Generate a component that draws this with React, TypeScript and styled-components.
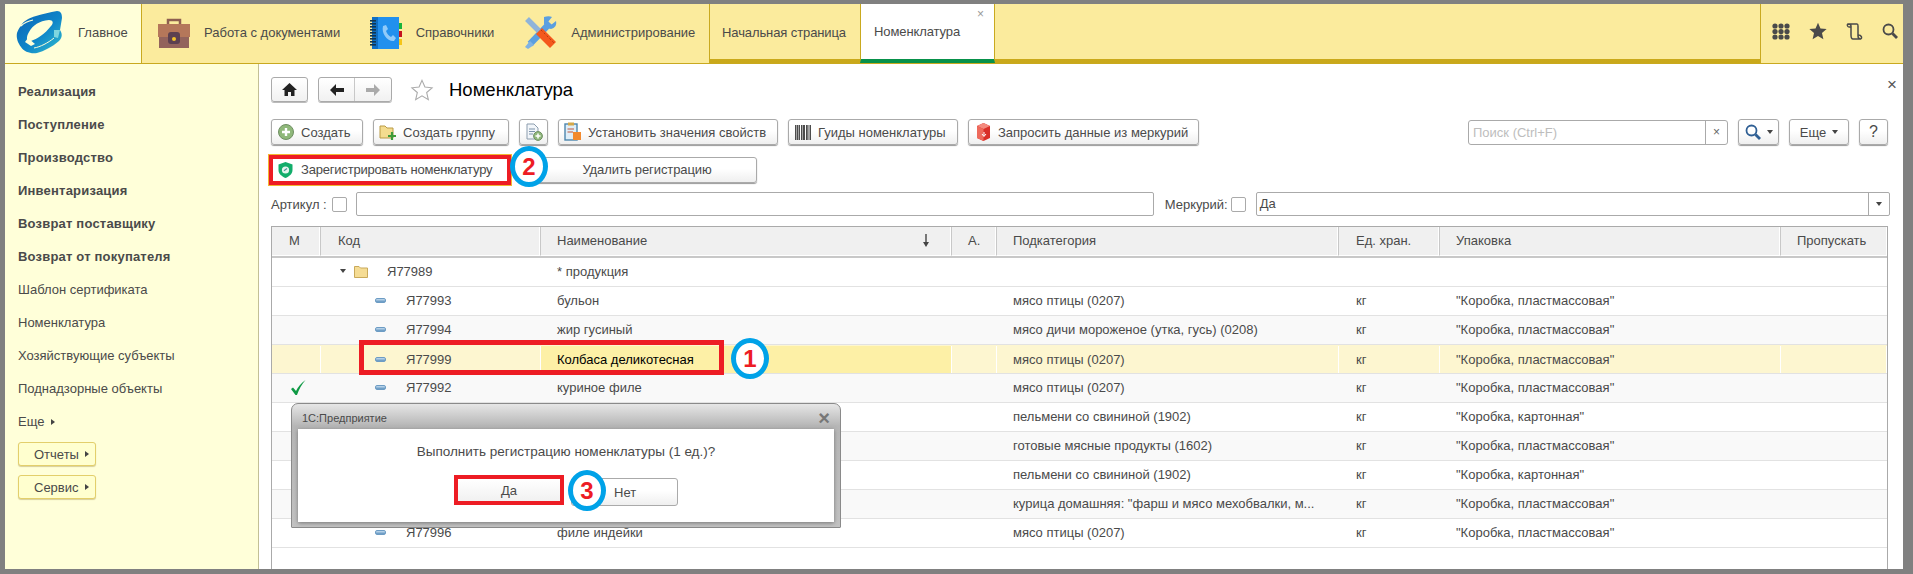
import React from "react";
import styled, { createGlobalStyle } from "styled-components";

const GlobalStyle = createGlobalStyle`
  html, body {
    margin: 0;
    padding: 0;
    background: #808080;
    overflow: hidden;
  }
  * {
    box-sizing: border-box;
  }
`;

const Frame = styled.div`
  position: relative;
  width: 1913px;
  height: 574px;
  padding: 4px 10px 5px 5px;
  background: #808080;
  font-family: "Liberation Sans", Arial, sans-serif;
  font-size: 13px;
  color: #4a4a4a;
`;

const Shell = styled.div`
  display: flex;
  flex-direction: column;
  height: 100%;
  background: #fff;
`;

const TopBar = styled.div`
  display: flex;
  height: 60px;
  flex: none;
  background: #fbeb9d;
  border-bottom: 1px solid #c9a91f;
`;

const HomeItem = styled.div`
  display: flex;
  align-items: center;
  width: 137px;
  padding: 0 0 2px 11px;
  gap: 15px;
  background: #ffffd9;
  border-right: 1px solid #c9a91f;
`;

const MenuBar = styled.div`
  display: flex;
  width: 568px;
  border-right: 1px solid #c9a91f;
`;

const MenuItem = styled.div<{ $w: number }>`
  display: flex;
  align-items: center;
  width: ${(p) => p.$w}px;
  gap: 14px;
  padding-left: 16px;
  padding-bottom: 2px;
  white-space: nowrap;
`;

const TabStrip = styled.div`
  display: flex;
  flex: 1;
  border-bottom: 4px solid #edc91c;
  border-image: linear-gradient(#f3d92e, #c9a81a) 1;
`;

const Tab = styled.div`
  display: flex;
  align-items: center;
  width: 150px;
  padding-left: 12px;
  padding-top: 2px;
  letter-spacing: -0.1px;
`;

const ActiveTab = styled.div`
  position: relative;
  display: flex;
  align-items: center;
  width: 135px;
  margin-bottom: -4px;
  padding-left: 13px;
  letter-spacing: -0.1px;
  background: #fff;
  border-left: 1px solid #c9a91f;
  border-right: 1px solid #c9a91f;
  border-bottom: 4px solid #08914a;
`;

const TabClose = styled.span`
  position: absolute;
  top: 3px;
  right: 10px;
  font-size: 12px;
  color: #999;
`;

const TopTools = styled.div`
  display: flex;
  align-items: center;
  width: 143px;
  gap: 19px;
  padding: 0 0 5px 11px;
  border-left: 1px solid #c9a91f;
`;

const Main = styled.div`
  display: flex;
  flex: 1;
  min-height: 0;
`;

const Sidebar = styled.div`
  display: flex;
  flex-direction: column;
  width: 254px;
  flex: none;
  padding: 11px 0 0 13px;
  background: #ffffd9;
  border-right: 1px solid #c3c096;
`;

const SideLink = styled.div<{ $bold?: boolean }>`
  display: flex;
  align-items: center;
  gap: 7px;
  height: 33px;
  font-weight: ${(p) => (p.$bold ? 700 : 400)};
  letter-spacing: ${(p) => (p.$bold ? "0.2px" : "0")};
`;

const SideButtons = styled.div`
  display: flex;
  flex-direction: column;
  gap: 9px;
  margin-top: 4px;
`;

const SideButton = styled.div`
  display: flex;
  align-items: center;
  gap: 6px;
  width: 78px;
  height: 24px;
  padding-left: 15px;
  background: #ffffcf;
  border: 1px solid #e3cf6b;
  border-radius: 3px;
  box-shadow: 0 1px 1px #d8cf9a;
`;

const Caret = styled.span<{ $right?: boolean }>`
  display: inline-block;
  width: 0;
  height: 0;
  ${(p) =>
    p.$right
      ? "border-top: 3px solid transparent; border-bottom: 3px solid transparent; border-left: 4px solid #444;"
      : "border-left: 3px solid transparent; border-right: 3px solid transparent; border-top: 4px solid #444;"}
`;

const Content = styled.div`
  position: relative;
  display: flex;
  flex-direction: column;
  flex: 1;
  min-width: 0;
  padding: 13px 15px 0 12px;
`;

const TitleRow = styled.div`
  display: flex;
  align-items: center;
  height: 25px;
`;

const NavButton = styled.div`
  display: flex;
  align-items: center;
  justify-content: center;
  height: 25px;
  width: 37px;
  background: linear-gradient(#fff, #f1f1f1);
  border: 1px solid #aaa;
  border-radius: 3px;
  box-shadow: 0 1px 0 #bbb;
`;

const NavGroup = styled(NavButton)`
  width: 74px;
  margin-left: 10px;
  justify-content: flex-start;
`;

const NavHalf = styled.div<{ $divider?: boolean }>`
  display: flex;
  align-items: center;
  justify-content: center;
  width: 36px;
  height: 100%;
  ${(p) => (p.$divider ? "border-right: 1px solid #c8c8c8;" : "")}
`;

const Title = styled.div`
  margin-left: 15px;
  font-size: 18.5px;
  color: #000;
  white-space: nowrap;
`;

const CloseForm = styled.span`
  position: absolute;
  top: 12px;
  right: 6px;
  font-size: 17px;
  line-height: 18px;
  color: #555;
`;

const Toolbar = styled.div`
  display: flex;
  align-items: center;
  gap: 10px;
  height: 26px;
  margin-top: 17px;
`;

const Button = styled.div<{ $w: number; $center?: boolean }>`
  display: flex;
  align-items: center;
  justify-content: ${(p) => (p.$center ? "center" : "flex-start")};
  gap: 6px;
  flex: none;
  width: ${(p) => p.$w}px;
  height: 26px;
  padding-left: ${(p) => (p.$center ? 0 : 5)}px;
  background: linear-gradient(#fff 45%, #efefef);
  border: 1px solid #aaa;
  border-radius: 3px;
  box-shadow: 0 1px 1px #999;
  white-space: nowrap;
`;

const IconSlot = styled.span`
  display: flex;
  align-items: center;
  justify-content: center;
  flex: none;
  width: 18px;
`;

const HelpMark = styled.span`
  font-size: 16px;
`;

const SearchBox = styled.div`
  display: flex;
  width: 260px;
  height: 25px;
  margin-left: auto;
  border: 1px solid #aaa;
  border-radius: 3px;
  background: #fff;
`;

const SearchText = styled.div`
  flex: 1;
  padding: 4px 0 0 4px;
  color: #bdbdbd;
`;

const SearchClear = styled.div`
  display: flex;
  align-items: center;
  justify-content: center;
  width: 22px;
  color: #666;
  font-size: 12px;
  border-left: 1px solid #aaa;
`;

const RegisterRow = styled.div`
  display: flex;
  align-items: center;
  gap: 25px;
  height: 33px;
  margin: 8px 0 0 -3px;
`;

const RegisterFrame = styled.div`
  display: flex;
  align-items: center;
  gap: 8px;
  width: 244px;
  height: 32px;
  padding-left: 5px;
  letter-spacing: -0.2px;
  background: #fff;
  border: 5px solid #ed1c24;
  outline: 1px solid #f2b632;
  outline-offset: -1px;
  white-space: nowrap;
`;

const RemoveButton = styled(Button)`
  letter-spacing: -0.1px;
`;

const FilterRow = styled.div`
  display: flex;
  align-items: center;
  height: 24px;
  margin-top: 6px;
`;

const FilterLabel = styled.span<{ $before?: number }>`
  margin-left: ${(p) => p.$before ?? 0}px;
  white-space: nowrap;
`;

const CheckBox = styled.span<{ $before: number }>`
  flex: none;
  width: 15px;
  height: 15px;
  margin-left: ${(p) => p.$before}px;
  background: #fff;
  border: 1px solid #aaa;
  border-radius: 2px;
`;

const FilterInput = styled.div<{ $w: number; $before: number }>`
  flex: none;
  width: ${(p) => p.$w}px;
  height: 24px;
  margin-left: ${(p) => p.$before}px;
  padding: 4px 0 0 3px;
  border: 1px solid #aaa;
  border-radius: 2px;
  background: #fff;
`;

const ComboInput = styled(FilterInput)`
  display: flex;
  justify-content: space-between;
  padding: 0 0 0 3px;
  line-height: 22px;
`;

const ComboArrow = styled.span`
  display: flex;
  align-items: center;
  justify-content: center;
  width: 21px;
  border-left: 1px solid #aaa;
`;

const Table = styled.div`
  display: flex;
  flex-direction: column;
  flex: 1;
  margin-top: 10px;
  border: 1px solid #aaa;
  border-bottom: 0;
`;

const COLUMNS = "49px 220px 411px 45px 342px 101px 341px 1fr";

const HeaderRow = styled.div`
  display: grid;
  grid-template-columns: ${COLUMNS};
  height: 31px;
  flex: none;
  border-bottom: 2px solid #c8c8c8;
`;

const HeaderCell = styled.div<{ $pad: number }>`
  display: flex;
  align-items: center;
  justify-content: space-between;
  padding: 0 21px 2px ${(p) => p.$pad}px;
  background: #f0f0f0;
  border-right: 1px solid #c8c8c8;
  border-bottom: 1px solid #fff;
  box-shadow: inset -1px 0 0 #fff;
  white-space: nowrap;

  &:last-child {
    border-right: 0;
    padding-right: 0;
  }
`;

const Row = styled.div<{ $tone?: "plain" | "soft" | "active" }>`
  display: grid;
  grid-template-columns: ${COLUMNS};
  height: 29px;
  flex: none;
  border-bottom: 1px solid #e2e2e2;
  background: ${(p) => (p.$tone === "soft" ? "#f9f9f9" : p.$tone === "active" ? "#fdf6d0" : "#fff")};
`;

const Cell = styled.div<{ $pad?: number }>`
  display: flex;
  align-items: center;
  min-width: 0;
  padding-left: ${(p) => p.$pad ?? 16}px;
  padding-bottom: 2px;
  white-space: nowrap;
  overflow: hidden;
`;

const ActiveRowCell = styled(Cell)`
  border-right: 1px solid #fff;
  height: 27px;
  margin-top: 1px;
  padding-bottom: 1px;
`;

const CurrentCell = styled(ActiveRowCell)`
  background: #fdf0a6;
  color: #000;
`;

const Dash = styled.span`
  flex: none;
  width: 11px;
  height: 5px;
  margin-right: 20px;
  border: 1px solid #6d9cc4;
  border-radius: 2px;
  background: linear-gradient(#c5dcef, #5f93bf);
`;

const Dialog = styled.div`
  position: absolute;
  left: 291px;
  top: 403px;
  display: flex;
  flex-direction: column;
  width: 550px;
  height: 125px;
  padding: 0 6px 5px;
  background: linear-gradient(#e6e6e6, #b6b6b6 22px, #c2c2c2);
  border: 1px solid #8a8a8a;
  border-radius: 7px 7px 1px 1px;
`;

const DialogTitle = styled.div`
  display: flex;
  align-items: center;
  justify-content: space-between;
  flex: none;
  height: 25px;
  padding: 3px 4px 0 4px;
  font-size: 11px;
`;

const DialogClose = styled.span`
  font-size: 20px;
  font-weight: 700;
  color: #777;
`;

const DialogBody = styled.div`
  display: flex;
  flex-direction: column;
  align-items: center;
  flex: 1;
  padding-top: 15px;
  background: #fff;
  box-shadow: 0 1px 4px #777;
`;

const DialogMessage = styled.div`
  font-size: 13.5px;
  line-height: 16px;
`;

const DialogButtons = styled.div`
  display: flex;
  align-items: flex-start;
  gap: 7px;
  margin-top: 15px;
`;

const YesButton = styled.div`
  display: flex;
  align-items: center;
  justify-content: center;
  width: 110px;
  height: 30px;
  border: 4px solid #ed1c24;
  background: linear-gradient(#fff, #f1f1f1);
`;

const NoButton = styled(Button)`
  margin-top: 3px;
  padding-left: 42px;
  height: 28px;
  box-shadow: none;
`;

const RedBox = styled.div`
  position: absolute;
  left: 359px;
  top: 340px;
  width: 365px;
  height: 35px;
  border: 5px solid #ed1c24;
`;

const Badge = styled.div<{ $x: number; $y: number }>`
  position: absolute;
  left: ${(p) => p.$x}px;
  top: ${(p) => p.$y}px;
  display: flex;
  align-items: center;
  justify-content: center;
  width: 38px;
  height: 41px;
  background: #fff;
  border: 5px solid #00a2e8;
  border-radius: 50%;
  font-size: 24px;
  font-weight: 700;
  color: #ed1c24;
`;

const Logo = () => (
  <svg width="47" height="43" viewBox="0 0 47 43" style={{ flex: "none" }}>
    <defs>
      <linearGradient id="lg1" x1="0" y1="0" x2="1" y2="1">
        <stop offset="0" stopColor="#0b63b5" />
        <stop offset="0.55" stopColor="#0f86c9" />
        <stop offset="1" stopColor="#35c0cd" />
      </linearGradient>
    </defs>
    <path d="M5 15 C7 10 13 7 20 5 C27 3 34 1 41 0 C45 0 46 3 46 7 L44 19 C46 22 47 26 43 30 C36 36 28 40 21 42 C15 43 8 41 5 36 C2 32 0 27 1 22 C2 19 3 17 5 15 Z" fill="url(#lg1)" />
    <path d="M13 21 C17 14 23 10 33 9 C37 9 38 12 35 15 C29 23 21 28 15 30 C10 31 10 26 13 21 Z" fill="#ffffd9" />
    <path d="M9 31 L15 35 L19 33 L12 27 Z" fill="#ffffd9" />
    <path d="M5 15 C8 12 12 10 17 9" stroke="#ffffd9" strokeWidth="1.2" fill="none" />
    <path d="M38 19 L44 19 L42 27 L38 26 Z" fill="#7fd6de" />
    <path d="M18 37 C24 36 32 32 38 27" stroke="#ffffd9" strokeWidth="1" fill="none" />
  </svg>
);

const Briefcase = () => (
  <svg width="32" height="30" viewBox="0 0 32 30" style={{ flex: "none" }}>
    <path d="M10 6 V2 H22 V6" fill="none" stroke="#8e5f50" strokeWidth="2.5" />
    <rect x="0" y="6" width="32" height="13" fill="#b5775a" />
    <rect x="1" y="19" width="30" height="11" fill="#93635c" />
    <rect x="10" y="14" width="12" height="12" rx="3" fill="#5c4050" />
    <circle cx="16" cy="21" r="2" fill="#f3c22a" />
  </svg>
);

const PhoneBook = () => (
  <svg width="32" height="32" viewBox="0 0 32 32" style={{ flex: "none" }}>
    <rect x="2" y="0" width="27" height="32" fill="#2190ee" />
    <rect x="2" y="0" width="6" height="32" fill="#0f6fc4" />
    <rect x="29" y="6" width="3" height="6" fill="#19b33c" />
    <rect x="29" y="14" width="3" height="6" fill="#c4121f" />
    <rect x="29" y="22" width="3" height="6" fill="#f5c518" />
    {[3, 6, 9, 12, 15, 18, 21, 24, 27].map((y) => (
      <rect key={y} x="0" y={y} width="6" height="1.6" fill="#12364f" />
    ))}
    <path d="M13 9 L16 8 L18 12 L16 14 C17 17 19 19 21 20 L23 18 L26 21 L24 24 C18 25 11 17 13 9 Z" fill="#90caf9" />
  </svg>
);

const Tools = () => (
  <svg width="33" height="33" viewBox="0 0 33 33" style={{ flex: "none" }}>
    <path d="M26 7 L6 28" stroke="#5b9fe0" strokeWidth="6.5" />
    <path d="M20 1 C23 0 26 0 28 1 L24 6 L27 9 L32 5 C33 9 31 12 27 13 L23 12 L20 8 Z" fill="#5b9fe0" />
    <path d="M1 31 L6 25 L10 29 L4 33 Z" fill="#7fb2e3" />
    <path d="M3 3 L15 15" stroke="#8fb4d9" strokeWidth="5.5" />
    <path d="M15 15 L29 29" stroke="#f4581c" strokeWidth="8.5" />
    <path d="M17 14 L30 27" stroke="#b53c0e" strokeWidth="1" strokeDasharray="2 2" />
  </svg>
);

const DotGrid = () => (
  <svg width="18" height="17" viewBox="0 0 18 17">
    {[3, 9, 15].map((x) =>
      [3, 8.5, 14].map((y) => <circle key={`${x}-${y}`} cx={x} cy={y} r="2.6" fill="#4a4a4a" />)
    )}
  </svg>
);

const StarFilled = () => (
  <svg width="18" height="18" viewBox="0 0 24 24">
    <path d="M12 1 L15.3 8.6 L23.5 9.4 L17.3 14.8 L19.2 23 L12 18.6 L4.8 23 L6.7 14.8 L.5 9.4 L8.7 8.6 Z" fill="#4a4a4a" />
  </svg>
);

const StarOutline = () => (
  <svg width="24" height="22" viewBox="0 0 24 24" style={{ marginLeft: 18, flex: "none" }}>
    <path d="M12 1.5 L15.2 8.8 L23 9.6 L17.1 14.8 L18.9 22.5 L12 18.4 L5.1 22.5 L6.9 14.8 L1 9.6 L8.8 8.8 Z" fill="#fff" stroke="#aaa" strokeWidth="1.2" />
  </svg>
);

const Scroll = () => (
  <svg width="17" height="17" viewBox="0 0 17 17" fill="none" stroke="#4a4a4a" strokeWidth="1.5">
    <path d="M2 1 H11 C12 1 12 2 12 3 V13 C12 15 13 16 15 16 H7 C5 16 5 14 5 12 V3 C5 2 4 1 2 1 C1 1 1 4 3 4 H5" />
    <path d="M15 16 C16 15 16 12 12 12" />
  </svg>
);

const Lens = ({ color = "#4a4a4a", size = 16 }: { color?: string; size?: number }) => (
  <svg width={size} height={size} viewBox="0 0 16 16" fill="none" stroke={color} style={{ flex: "none" }}>
    <circle cx="6.5" cy="6.5" r="5" strokeWidth="1.8" />
    <path d="M10.5 10.5 L15 15" strokeWidth="2.8" />
  </svg>
);

const HomeIcon = () => (
  <svg width="15" height="13" viewBox="0 0 15 13">
    <path d="M7.5 0 L15 7 H12.5 V13 H9 V9 H6 V13 H2.5 V7 H0 Z" fill="#222" />
  </svg>
);

const ArrowIcon = ({ left, color }: { left?: boolean; color: string }) => (
  <svg width="14" height="12" viewBox="0 0 14 12">
    <path d={left ? "M6 0 V4 H14 V8 H6 V12 L0 6 Z" : "M8 0 V4 H0 V8 H8 V12 L14 6 Z"} fill={color} />
  </svg>
);

const PlusCircle = () => (
  <svg width="16" height="16" viewBox="0 0 16 16">
    <circle cx="8" cy="8" r="7.5" fill="#8fb87a" stroke="#6f8f63" />
    <path d="M8 4 V12 M4 8 H12" stroke="#fff" strokeWidth="2.4" />
  </svg>
);

const FolderPlus = () => (
  <svg width="18" height="17" viewBox="0 0 18 17">
    <path d="M1 2 H6 L8 4 H14 V14 H1 Z" fill="#f4dc8f" stroke="#b99a45" />
    <path d="M13 8 V16 M9 12 H17" stroke="#3f9b3a" strokeWidth="2.2" />
  </svg>
);

const DocPlus = () => (
  <svg width="18" height="18" viewBox="0 0 18 18">
    <path d="M2 1 H9 L13 5 V16 H2 Z" fill="#f2f6fa" stroke="#8b9cad" />
    <path d="M4 6 H10 M4 8.5 H10 M4 11 H8" stroke="#7c93ab" />
    <circle cx="13" cy="13" r="4.4" fill="#8fb87a" stroke="#6f8f63" />
    <path d="M13 10.5 V15.5 M10.5 13 H15.5" stroke="#fff" strokeWidth="1.5" />
  </svg>
);

const Clipboard = () => (
  <svg width="18" height="20" viewBox="0 0 18 20">
    <rect x="1" y="2" width="12" height="16" fill="#dfeef8" stroke="#4d86ad" strokeWidth="1.4" />
    <rect x="4" y="0.5" width="6" height="3" fill="#d4a84a" />
    <path d="M3.5 7 H10 M3.5 10 H9" stroke="#c0563d" />
    <rect x="9" y="10" width="8" height="8" fill="#f28a2e" />
  </svg>
);

const Barcode = () => (
  <svg width="16" height="15" viewBox="0 0 16 15">
    {[0, 2, 3.5, 6, 7.5, 9, 11, 12.5, 14.5].map((x, i) => (
      <rect key={x} x={x} y="0" width={i % 2 ? 1 : 1.5} height="15" fill="#4c4c4c" />
    ))}
  </svg>
);

const RedCube = () => (
  <svg width="15" height="18" viewBox="0 0 15 18">
    <path d="M7.5 0 L14 3 V15 L7.5 18 L1 15 V3 Z" fill="#d92f28" />
    <path d="M7.5 0 L14 3 L7.5 6 L1 3 Z" fill="#f48a7e" />
    <path d="M1 3 L7.5 6 V18 L1 15 Z" fill="#ee6a5c" />
    <path d="M8 9 V13 M6 11 L8 13.5 L10 11" stroke="#fff" strokeWidth="1" fill="none" />
  </svg>
);

const Shield = () => (
  <svg width="15" height="16" viewBox="0 0 15 16" style={{ flex: "none" }}>
    <path d="M7.5 0 L14.5 2.5 V8 C14.5 12 11 14.5 7.5 16 C4 14.5 .5 12 .5 8 V2.5 Z" fill="#12ad6b" />
    <circle cx="7.5" cy="8" r="3.6" fill="#e6f5ee" />
    <path d="M6 8.8 L9 6.5" stroke="#4b8f9b" strokeWidth="1.2" />
  </svg>
);

const SortDown = () => (
  <svg width="8" height="13" viewBox="0 0 8 13">
    <path d="M4 0 V9" stroke="#444" strokeWidth="1.4" />
    <path d="M1 8 H7 L4 13 Z" fill="#444" />
  </svg>
);

const Folder = () => (
  <svg width="14" height="13" viewBox="0 0 14 13" style={{ flex: "none", margin: "0 19px 0 8px" }}>
    <path d="M.5 1.5 H5 L6.5 3 H13.5 V12.5 H.5 Z" fill="#f5dc94" stroke="#c9a95a" />
  </svg>
);

const GreenCheck = () => (
  <svg width="15" height="15" viewBox="0 0 15 15">
    <path d="M0 9 L2 7.5 L5 11 C7 7 10 3 14.5 0 C11 4 8 9 6 15 H4.5 Z" fill="#0f9a45" />
  </svg>
);

type Item = { mark?: boolean; code: string; name: string; sub: string; box: string };

const PLASTIC = '"Коробка, пластмассовая"';
const CARTON = '"Коробка, картонная"';

const rows: Item[] = [
  { code: "Я77993", name: "бульон", sub: "мясо птицы (0207)", box: PLASTIC },
  { code: "Я77994", name: "жир гусиный", sub: "мясо дичи мороженое (утка, гусь) (0208)", box: PLASTIC },
  { code: "Я77999", name: "Колбаса деликотесная", sub: "мясо птицы (0207)", box: PLASTIC },
  { mark: true, code: "Я77992", name: "куриное филе", sub: "мясо птицы (0207)", box: PLASTIC },
  { code: "", name: "", sub: "пельмени со свининой (1902)", box: CARTON },
  { code: "", name: "", sub: "готовые мясные продукты (1602)", box: PLASTIC },
  { code: "", name: "", sub: "пельмени со свининой (1902)", box: CARTON },
  { code: "", name: "", sub: 'курица домашняя: "фарш и мясо мехобвалки, м...', box: PLASTIC },
  { code: "Я77996", name: "филе индейки", sub: "мясо птицы (0207)", box: PLASTIC },
];

const App = () => {
  return (
    <Frame>
      <GlobalStyle />
      <Shell>
        <TopBar>
          <HomeItem>
            <Logo />
            Главное
          </HomeItem>
          <MenuBar>
            <MenuItem $w={212}>
              <Briefcase />
              Работа с документами
            </MenuItem>
            <MenuItem $w={155}>
              <PhoneBook />
              Справочники
            </MenuItem>
            <MenuItem $w={201}>
              <Tools />
              Администрирование
            </MenuItem>
          </MenuBar>
          <TabStrip>
            <Tab>Начальная страница</Tab>
            <ActiveTab>
              Номенклатура
              <TabClose>×</TabClose>
            </ActiveTab>
          </TabStrip>
          <TopTools>
            <DotGrid />
            <StarFilled />
            <Scroll />
            <Lens />
          </TopTools>
        </TopBar>
        <Main>
          <Sidebar>
            <SideLink $bold>Реализация</SideLink>
            <SideLink $bold>Поступление</SideLink>
            <SideLink $bold>Производство</SideLink>
            <SideLink $bold>Инвентаризация</SideLink>
            <SideLink $bold>Возврат поставщику</SideLink>
            <SideLink $bold>Возврат от покупателя</SideLink>
            <SideLink>Шаблон сертификата</SideLink>
            <SideLink>Номенклатура</SideLink>
            <SideLink>Хозяйствующие субъекты</SideLink>
            <SideLink>Поднадзорные объекты</SideLink>
            <SideLink>
              Еще
              <Caret $right />
            </SideLink>
            <SideButtons>
              <SideButton>
                Отчеты
                <Caret $right />
              </SideButton>
              <SideButton>
                Сервис
                <Caret $right />
              </SideButton>
            </SideButtons>
          </Sidebar>
          <Content>
            <TitleRow>
              <NavButton>
                <HomeIcon />
              </NavButton>
              <NavGroup>
                <NavHalf $divider>
                  <ArrowIcon left color="#222" />
                </NavHalf>
                <NavHalf>
                  <ArrowIcon color="#aaa" />
                </NavHalf>
              </NavGroup>
              <StarOutline />
              <Title>Номенклатура</Title>
              <CloseForm>×</CloseForm>
            </TitleRow>
            <Toolbar>
              <Button $w={92}>
                <IconSlot>
                  <PlusCircle />
                </IconSlot>
                Создать
              </Button>
              <Button $w={136}>
                <IconSlot>
                  <FolderPlus />
                </IconSlot>
                Создать группу
              </Button>
              <Button $w={29} $center>
                <DocPlus />
              </Button>
              <Button $w={220}>
                <IconSlot>
                  <Clipboard />
                </IconSlot>
                Установить значения свойств
              </Button>
              <Button $w={170}>
                <IconSlot>
                  <Barcode />
                </IconSlot>
                Гуиды номенклатуры
              </Button>
              <Button $w={231}>
                <IconSlot>
                  <RedCube />
                </IconSlot>
                Запросить данные из меркурий
              </Button>
              <SearchBox>
                <SearchText>Поиск (Ctrl+F)</SearchText>
                <SearchClear>×</SearchClear>
              </SearchBox>
              <Button $w={41} $center>
                <Lens color="#2f5f94" />
                <Caret />
              </Button>
              <Button $w={60} $center>
                Еще
                <Caret />
              </Button>
              <Button $w={29} $center>
                <HelpMark>?</HelpMark>
              </Button>
            </Toolbar>
            <RegisterRow>
              <RegisterFrame>
                <Shield />
                Зарегистрировать номенклатуру
              </RegisterFrame>
              <RemoveButton $w={220} $center>
                Удалить регистрацию
              </RemoveButton>
            </RegisterRow>
            <FilterRow>
              <FilterLabel>Артикул :</FilterLabel>
              <CheckBox $before={5} />
              <FilterInput $w={798} $before={9} />
              <FilterLabel $before={11}>Меркурий:</FilterLabel>
              <CheckBox $before={3} />
              <ComboInput $w={634} $before={10}>
                Да
                <ComboArrow>
                  <Caret />
                </ComboArrow>
              </ComboInput>
            </FilterRow>
            <Table>
              <HeaderRow>
                <HeaderCell $pad={17}>М</HeaderCell>
                <HeaderCell $pad={17}>Код</HeaderCell>
                <HeaderCell $pad={16}>
                  Наименование
                  <SortDown />
                </HeaderCell>
                <HeaderCell $pad={16}>А.</HeaderCell>
                <HeaderCell $pad={16}>Подкатегория</HeaderCell>
                <HeaderCell $pad={17}>Ед. хран.</HeaderCell>
                <HeaderCell $pad={16}>Упаковка</HeaderCell>
                <HeaderCell $pad={16}>Пропускать</HeaderCell>
              </HeaderRow>
              <Row>
                <Cell />
                <Cell $pad={19}>
                  <Caret />
                  <Folder />
                  Я77989
                </Cell>
                <Cell>* продукция</Cell>
              </Row>
              {rows.map((r, i) => {
                const active = i === 2;
                const tone = active ? "active" : i === 1 || i === 3 || i === 5 || i === 7 ? "soft" : "plain";
                const C = active ? ActiveRowCell : Cell;
                return (
                  <Row key={i} $tone={tone}>
                    <C $pad={19}>{r.mark && <GreenCheck />}</C>
                    <C $pad={54}>
                      {r.code && <Dash />}
                      {r.code}
                    </C>
                    {active ? <CurrentCell>{r.name}</CurrentCell> : <Cell>{r.name}</Cell>}
                    <C />
                    <C>{r.sub}</C>
                    <C $pad={17}>кг</C>
                    <C>{r.box}</C>
                    <C />
                  </Row>
                );
              })}
            </Table>
          </Content>
        </Main>
      </Shell>

      <RedBox />
      <Badge $x={731} $y={338}>1</Badge>
      <Badge $x={510} $y={146}>2</Badge>

      <Dialog>
        <DialogTitle>
          1С:Предприятие
          <DialogClose>×</DialogClose>
        </DialogTitle>
        <DialogBody>
          <DialogMessage>Выполнить регистрацию номенклатуры (1 ед.)?</DialogMessage>
          <DialogButtons>
            <YesButton>Да</YesButton>
            <NoButton $w={107}>Нет</NoButton>
          </DialogButtons>
        </DialogBody>
      </Dialog>
      <Badge $x={568} $y={470}>3</Badge>
    </Frame>
  );
};

export default App;
